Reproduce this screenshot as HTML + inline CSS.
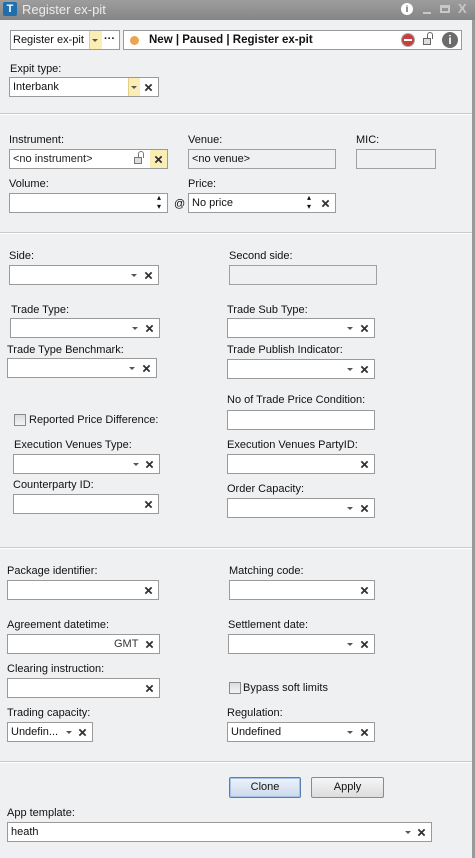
<!DOCTYPE html>
<html><head><meta charset="utf-8"><style>
*{box-sizing:border-box;margin:0;padding:0}
body{width:475px;height:858px;background:#eff0f2;font-family:"Liberation Sans","DejaVu Sans",sans-serif;font-size:11px;color:#111;position:relative;overflow:hidden}
.a{position:absolute}
.l{position:absolute;font-size:11px;line-height:13px;white-space:nowrap}
.b{position:absolute;height:20px;border:1px solid #9a9a9a;background:#fff;font-size:11px;line-height:18px;padding-left:3px;white-space:nowrap}
.g{background:#eff0f2;border-color:#a0a0a0}
.x{position:absolute;right:5px;top:5px;width:9px;height:9px}
.dd{position:absolute;top:8px;width:0;height:0;border-left:3px solid transparent;border-right:3px solid transparent;border-top:3px solid #555}
.sep{position:absolute;left:0;width:472px;height:2px;border-top:1px solid #c9cacc;border-bottom:1px solid #fff}
.cb{position:absolute;width:12px;height:12px;border:1px solid #8a8a8a;background:linear-gradient(#ddd,#f4f4f4)}
.btn{position:absolute;height:21px;border:1px solid #8a8a8a;border-radius:2px;background:linear-gradient(#f6f6f6,#dcdcdc);text-align:center;line-height:19px;font-size:11px}
</style></head><body>
<svg width="0" height="0" style="position:absolute"><defs><symbol id="X" viewBox="0 0 10 10"><path d="M1.5 1.5L8.5 8.5M8.5 1.5L1.5 8.5" stroke="#333" stroke-width="2"/></symbol></defs></svg>

<div class="a" style="left:0;top:0;width:475px;height:20px;background:linear-gradient(#9d9d9d,#858585)"></div>
<div class="a" style="left:3px;top:2px;width:14px;height:14px;background:#1f6fae;border-radius:2px;color:#fff;font-weight:bold;font-size:11px;line-height:14px;text-align:center">T</div>
<div class="l" style="left:22px;top:2px;color:#ececec;font-size:13px;line-height:16px">Register ex-pit</div>
<div class="a" style="left:401px;top:3px;width:12px;height:12px;border-radius:6px;background:#fff;color:#555;font-size:9px;font-weight:bold;line-height:12px;text-align:center">i</div>
<div class="a" style="left:423px;top:12px;width:8px;height:2px;background:#c8c8c8"></div>
<div class="a" style="left:440px;top:5px;width:10px;height:8px;border:2px solid #c8c8c8;border-top-width:3px"></div>
<div class="l" style="left:458px;top:2px;color:#c8c8c8;font-weight:bold;font-size:13px">X</div>
<div class="a" style="left:472px;top:20px;width:3px;height:838px;background:#9a9a9a"></div>

<div class="b" style="left:10px;top:30px;width:110px;height:20px;padding-left:2px">Register ex-pit</div>
<div class="a" style="left:89px;top:31px;width:13px;height:18px;background:#fbeeb4;border-left:1px solid #e3cf86"></div>
<div class="dd" style="left:92px;top:39px"></div>
<div class="l" style="left:104px;top:33px;font-weight:bold">···</div>
<div class="b" style="left:123px;top:30px;width:339px;height:20px"></div>
<div class="a" style="left:130px;top:36px;width:9px;height:9px;border-radius:5px;background:#e9a64e"></div>
<div class="l" style="left:149px;top:34px;font-weight:bold;font-size:11.5px">New | Paused | Register ex-pit</div>
<div class="a" style="left:401px;top:33px;width:14px;height:14px;border-radius:7px;background:#c74040;border:1px solid #aaa"><div class="a" style="left:2px;top:5px;width:8px;height:2px;background:#fff"></div></div>
<div class="a" style="left:423px;top:38px;width:8px;height:7px;border:1px solid #666;background:#ddd"></div>
<div class="a" style="left:427px;top:32px;width:6px;height:7px;border:1.5px solid #666;border-bottom:none;border-radius:3px 3px 0 0"></div>
<div class="a" style="left:442px;top:32px;width:16px;height:16px;border-radius:8px;background:#6b6b6b;color:#fff;font-weight:bold;font-size:12px;line-height:16px;text-align:center">i</div>

<div class="l" style="left:10px;top:63px">Expit type:</div>
<div class="b" style="left:9px;top:77px;width:150px">Interbank</div>
<div class="a" style="left:128px;top:78px;width:12px;height:18px;background:#fbeeb4;border-left:1px solid #e3cf86"></div>
<div class="dd" style="left:131px;top:86px"></div>
<svg class="a" style="left:144px;top:83px" width="9" height="9"><use href="#X"/></svg>

<div class="sep" style="top:113px"></div>

<div class="l" style="left:9px;top:134px">Instrument:</div>
<div class="b" style="left:9px;top:149px;width:159px;color:#222">&lt;no instrument&gt;</div>
<div class="a" style="left:134px;top:157px;width:8px;height:7px;border:1px solid #777;background:#ddd"></div>
<div class="a" style="left:138px;top:151px;width:6px;height:7px;border:1.5px solid #777;border-bottom:none;border-radius:3px 3px 0 0"></div>
<div class="a" style="left:150px;top:150px;width:17px;height:18px;background:#fbeeb4"></div>
<svg class="a" style="left:154px;top:155px" width="9" height="9"><use href="#X"/></svg>
<div class="l" style="left:188px;top:134px">Venue:</div>
<div class="b g" style="left:188px;top:149px;width:148px">&lt;no venue&gt;</div>
<div class="l" style="left:356px;top:134px">MIC:</div>
<div class="b g" style="left:356px;top:149px;width:80px"></div>

<div class="l" style="left:9px;top:178px">Volume:</div>
<div class="b" style="left:9px;top:193px;width:159px"></div>
<div class="l" style="left:157px;top:193px;font-size:8px;line-height:9px">▴<br>▾</div>
<div class="l" style="left:174px;top:198px">@</div>
<div class="l" style="left:188px;top:178px">Price:</div>
<div class="b" style="left:188px;top:193px;width:148px">No price</div>
<div class="l" style="left:307px;top:193px;font-size:8px;line-height:9px">▴<br>▾</div>
<svg class="a" style="left:321px;top:199px" width="9" height="9"><use href="#X"/></svg>

<div class="sep" style="top:232px"></div>

<div class="l" style="left:9px;top:250px">Side:</div>
<div class="b" style="left:9px;top:265px;width:150px"><div class="dd" style="left:121px"></div><svg class="x"><use href="#X"/></svg></div>
<div class="l" style="left:229px;top:250px">Second side:</div>
<div class="b g" style="left:229px;top:265px;width:148px"></div>

<div class="l" style="left:11px;top:304px">Trade Type:</div>
<div class="b" style="left:10px;top:318px;width:150px"><div class="dd" style="left:121px"></div><svg class="x"><use href="#X"/></svg></div>
<div class="l" style="left:227px;top:304px">Trade Sub Type:</div>
<div class="b" style="left:227px;top:318px;width:148px"><div class="dd" style="left:119px"></div><svg class="x"><use href="#X"/></svg></div>

<div class="l" style="left:7px;top:344px">Trade Type Benchmark:</div>
<div class="b" style="left:7px;top:358px;width:150px"><div class="dd" style="left:121px"></div><svg class="x"><use href="#X"/></svg></div>
<div class="l" style="left:227px;top:344px">Trade Publish Indicator:</div>
<div class="b" style="left:227px;top:359px;width:148px"><div class="dd" style="left:119px"></div><svg class="x"><use href="#X"/></svg></div>

<div class="l" style="left:227px;top:394px">No of Trade Price Condition:</div>
<div class="b" style="left:227px;top:410px;width:148px"></div>
<div class="cb" style="left:14px;top:414px"></div>
<div class="l" style="left:29px;top:414px">Reported Price Difference:</div>

<div class="l" style="left:14px;top:439px">Execution Venues Type:</div>
<div class="b" style="left:13px;top:454px;width:147px"><div class="dd" style="left:119px"></div><svg class="x"><use href="#X"/></svg></div>
<div class="l" style="left:227px;top:439px">Execution Venues PartyID:</div>
<div class="b" style="left:227px;top:454px;width:148px"><svg class="x"><use href="#X"/></svg></div>

<div class="l" style="left:13px;top:479px">Counterparty ID:</div>
<div class="b" style="left:13px;top:494px;width:146px"><svg class="x"><use href="#X"/></svg></div>
<div class="l" style="left:227px;top:483px">Order Capacity:</div>
<div class="b" style="left:227px;top:498px;width:148px"><div class="dd" style="left:119px"></div><svg class="x"><use href="#X"/></svg></div>

<div class="sep" style="top:547px"></div>

<div class="l" style="left:7px;top:565px">Package identifier:</div>
<div class="b" style="left:7px;top:580px;width:152px"><svg class="x"><use href="#X"/></svg></div>
<div class="l" style="left:229px;top:565px">Matching code:</div>
<div class="b" style="left:229px;top:580px;width:146px"><svg class="x"><use href="#X"/></svg></div>

<div class="l" style="left:7px;top:619px">Agreement datetime:</div>
<div class="b" style="left:7px;top:634px;width:153px"><span class="a" style="left:106px;top:0;color:#333">GMT</span><svg class="x"><use href="#X"/></svg></div>
<div class="l" style="left:228px;top:619px">Settlement date:</div>
<div class="b" style="left:228px;top:634px;width:147px"><div class="dd" style="left:118px"></div><svg class="x"><use href="#X"/></svg></div>

<div class="l" style="left:7px;top:663px">Clearing instruction:</div>
<div class="b" style="left:7px;top:678px;width:153px"><svg class="x"><use href="#X"/></svg></div>
<div class="cb" style="left:229px;top:682px"></div>
<div class="l" style="left:243px;top:682px">Bypass soft limits</div>

<div class="l" style="left:7px;top:707px">Trading capacity:</div>
<div class="b" style="left:7px;top:722px;width:86px">Undefin...<div class="dd" style="left:58px"></div><svg class="x"><use href="#X"/></svg></div>
<div class="l" style="left:227px;top:707px">Regulation:</div>
<div class="b" style="left:227px;top:722px;width:148px">Undefined<div class="dd" style="left:119px"></div><svg class="x"><use href="#X"/></svg></div>

<div class="sep" style="top:761px"></div>

<div class="btn" style="left:229px;top:777px;width:72px;border-color:#5a7db0;background:linear-gradient(#eef3fb,#cbd8ea);box-shadow:inset 0 0 0 1px #a8c4ea">Clone</div>
<div class="btn" style="left:311px;top:777px;width:73px">Apply</div>

<div class="l" style="left:7px;top:807px">App template:</div>
<div class="b" style="left:7px;top:822px;width:425px">heath<div class="dd" style="left:397px"></div><svg class="x"><use href="#X"/></svg></div>
</body></html>
